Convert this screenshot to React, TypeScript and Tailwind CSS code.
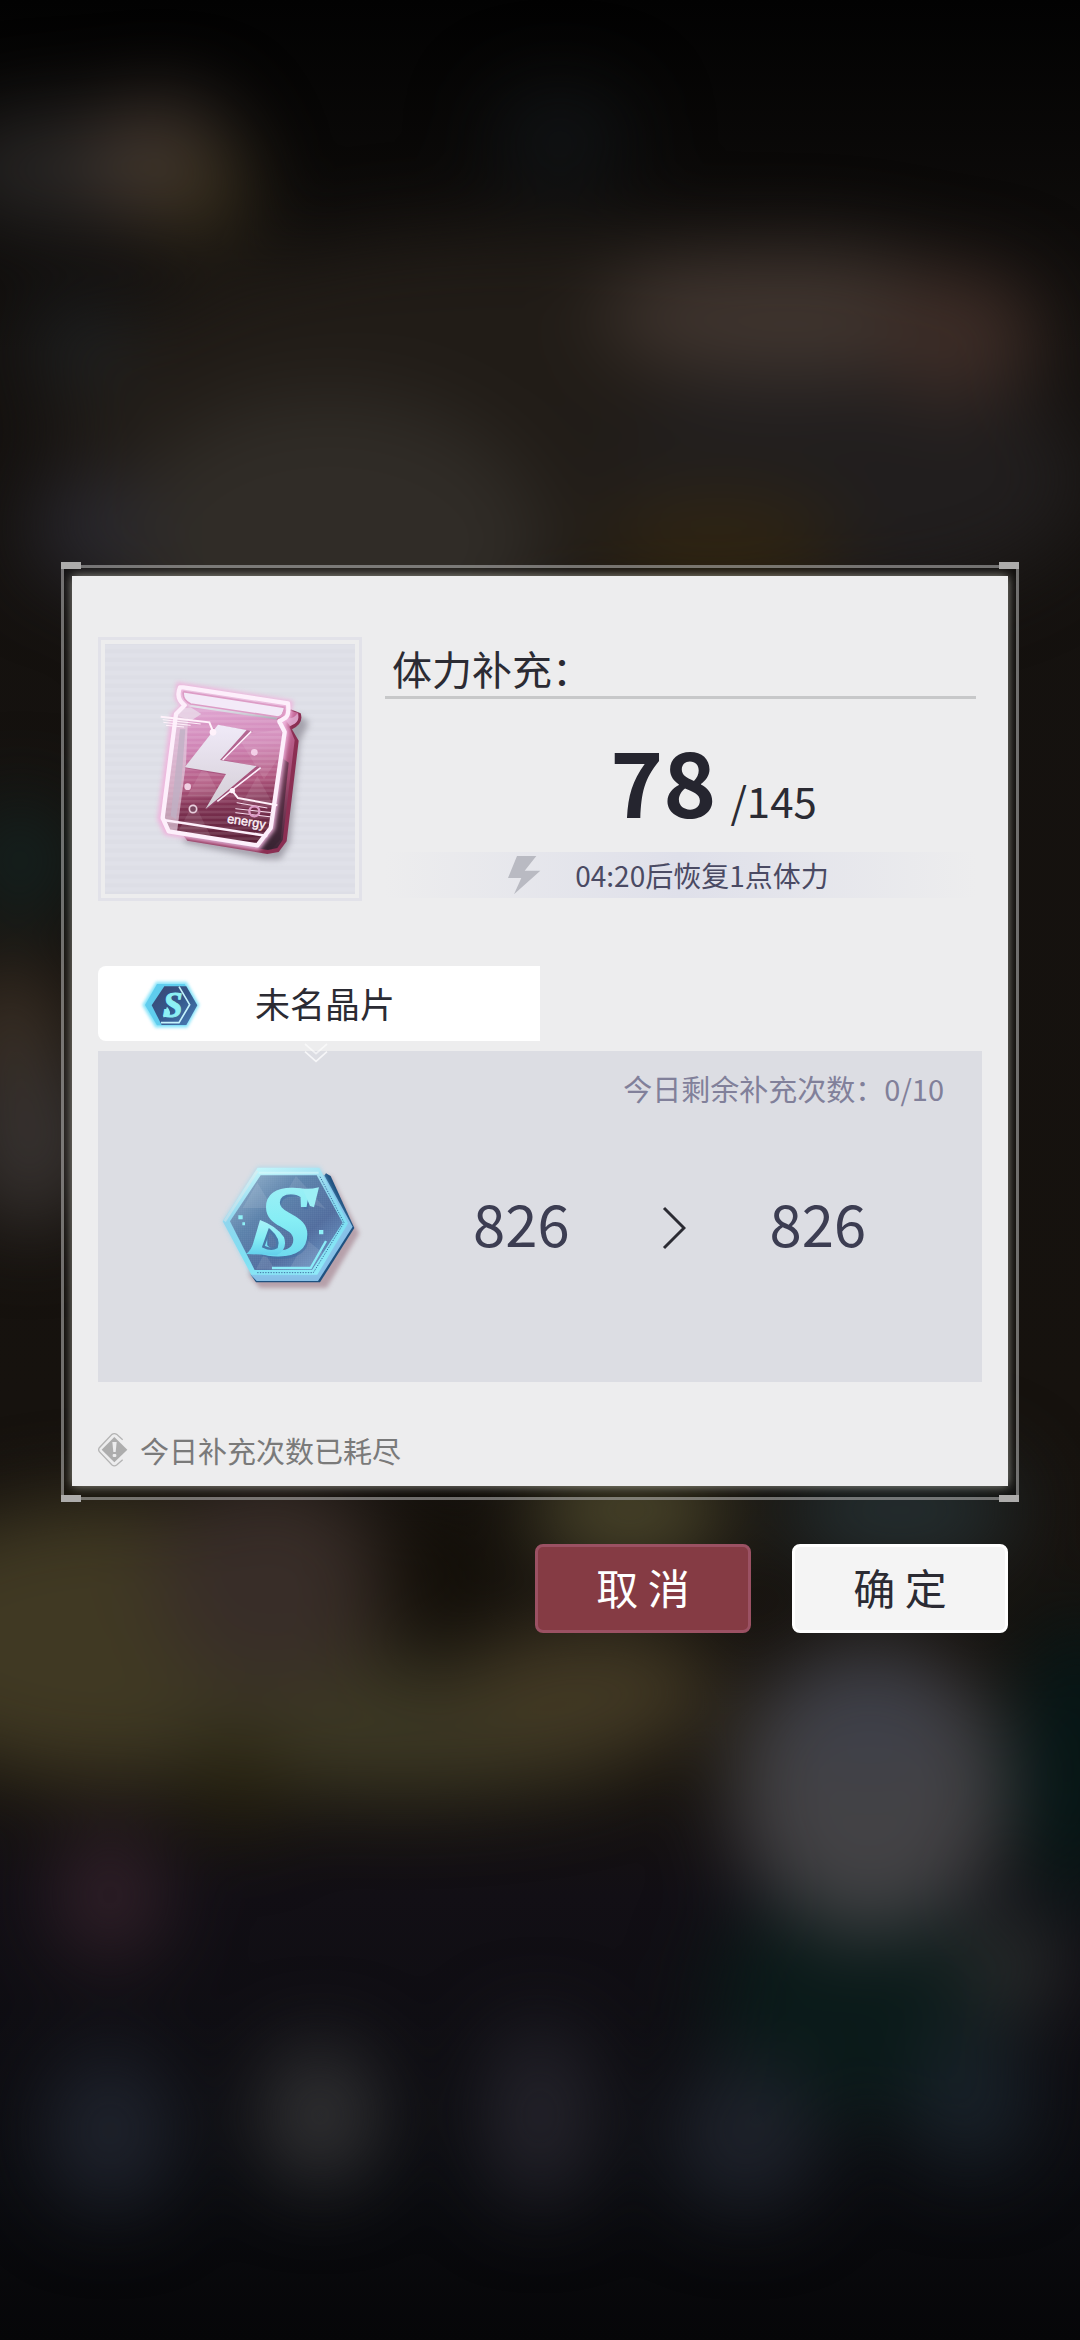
import React from 'react';
import { clsx } from 'clsx';

interface Blob {
  cx: number;
  cy: number;
  rx: number;
  ry: number;
  fill: string;
}

const blobs: Blob[] = [
  // base shading
  { cx: 520, cy: 420, rx: 460, ry: 190, fill: '#211c17' },
  { cx: 330, cy: 550, rx: 215, ry: 155, fill: '#302c27' },
  { cx: 850, cy: 480, rx: 240, ry: 120, fill: '#211e1e' },
  // top
  { cx: 60, cy: 170, rx: 120, ry: 60, fill: '#262423' },
  { cx: 160, cy: 165, rx: 75, ry: 65, fill: '#41362f' },
  { cx: 205, cy: 195, rx: 45, ry: 45, fill: '#3d331f' },
  { cx: 560, cy: 140, rx: 70, ry: 50, fill: '#111416' },
  { cx: 790, cy: 312, rx: 190, ry: 65, fill: '#40352f' },
  { cx: 960, cy: 335, rx: 80, ry: 65, fill: '#3e2d27' },
  { cx: 80, cy: 345, rx: 45, ry: 45, fill: '#1f2224' },
  { cx: 90, cy: 530, rx: 60, ry: 55, fill: '#2a2930' },
  { cx: 720, cy: 550, rx: 120, ry: 55, fill: '#302512' },
  // left and right of the dialog
  { cx: 20, cy: 860, rx: 50, ry: 60, fill: '#142422' },
  { cx: 10, cy: 1040, rx: 60, ry: 80, fill: '#3a2f24' },
  { cx: 30, cy: 1140, rx: 70, ry: 90, fill: '#373230' },
  // lower band
  { cx: 120, cy: 1640, rx: 260, ry: 140, fill: '#403923' },
  { cx: 400, cy: 1730, rx: 260, ry: 65, fill: '#3c3824' },
  { cx: 270, cy: 1580, rx: 115, ry: 105, fill: '#382d28' },
  { cx: 590, cy: 1690, rx: 130, ry: 65, fill: '#423924' },
  { cx: 630, cy: 1510, rx: 100, ry: 55, fill: '#4b462b' },
  { cx: 235, cy: 1780, rx: 40, ry: 50, fill: '#27220f' },
  { cx: 440, cy: 1570, rx: 60, ry: 60, fill: '#120e07' },
  { cx: 900, cy: 1510, rx: 120, ry: 60, fill: '#242e30' },
  { cx: 1080, cy: 1760, rx: 70, ry: 150, fill: '#061616' },
  { cx: 860, cy: 2000, rx: 150, ry: 120, fill: '#0a1a19' },
  { cx: 870, cy: 1790, rx: 138, ry: 145, fill: '#434245' },
  { cx: 870, cy: 1720, rx: 80, ry: 50, fill: '#3e404a' },
  { cx: 110, cy: 1895, rx: 52, ry: 65, fill: '#33212a' },
  { cx: 1010, cy: 1965, rx: 52, ry: 52, fill: '#2a2d2d' },
  // bottom dots
  { cx: 110, cy: 2130, rx: 65, ry: 80, fill: '#1f232d' },
  { cx: 320, cy: 2115, rx: 60, ry: 70, fill: '#323234' },
  { cx: 540, cy: 2115, rx: 58, ry: 90, fill: '#24232b' },
  { cx: 745, cy: 2135, rx: 75, ry: 75, fill: '#1e222b' },
  { cx: 970, cy: 2100, rx: 60, ry: 70, fill: '#19222a' },
];

const Backdrop: React.FC = () => (
  <svg
    className="absolute inset-0 h-full w-full"
    viewBox="0 0 1080 2340"
    preserveAspectRatio="none"
    aria-hidden="true"
  >
    <defs>
      <linearGradient id="sky" x1="0" y1="0" x2="0" y2="1">
        <stop offset="0" stopColor="#020202" />
        <stop offset="0.15" stopColor="#14110f" />
        <stop offset="0.6" stopColor="#16120e" />
        <stop offset="0.76" stopColor="#17130f" />
        <stop offset="0.81" stopColor="#120f15" />
        <stop offset="0.93" stopColor="#0b0c10" />
        <stop offset="1" stopColor="#060608" />
      </linearGradient>
      <filter id="haze" x="-50%" y="-50%" width="200%" height="200%" colorInterpolationFilters="sRGB">
        <feGaussianBlur stdDeviation="40" />
      </filter>
    </defs>
    <rect width="1080" height="2340" fill="url(#sky)" />
    <g filter="url(#haze)">
      {blobs.map((b, i) => (
        <ellipse key={i} {...b} />
      ))}
    </g>
  </svg>
);

const EnergyJar: React.FC = () => (
  <svg className="h-full w-full" viewBox="163 284 750 750" role="img" aria-label="energy">
    <defs>
      <linearGradient id="jar" x1="0.4" y1="0" x2="0.5" y2="1">
        <stop offset="0" stopColor="#e0a6d2" />
        <stop offset="0.3" stopColor="#cf83b4" />
        <stop offset="0.55" stopColor="#b0577f" />
        <stop offset="0.72" stopColor="#7c3050" />
        <stop offset="1" stopColor="#5a2038" />
      </linearGradient>
      <linearGradient id="jarSide" x1="0" y1="0" x2="0" y2="1">
        <stop offset="0" stopColor="#c86a9b" />
        <stop offset="0.5" stopColor="#a04a70" />
        <stop offset="1" stopColor="#3a2434" />
      </linearGradient>
      <linearGradient id="bolt" x1="0" y1="0" x2="0" y2="1">
        <stop offset="0" stopColor="#f0eaf8" />
        <stop offset="1" stopColor="#d3cdd5" />
      </linearGradient>
      <filter id="soft" x="-30%" y="-30%" width="160%" height="160%" colorInterpolationFilters="sRGB">
        <feGaussianBlur stdDeviation="10" />
      </filter>
      <filter id="soft2" x="-30%" y="-30%" width="160%" height="160%" colorInterpolationFilters="sRGB">
        <feGaussianBlur stdDeviation="6" />
      </filter>
      <pattern id="scan" width="20" height="16" patternUnits="userSpaceOnUse">
        <rect width="20" height="8" fill="#ffffff" opacity="0.1" />
      </pattern>
      <pattern id="scanBg" width="20" height="26" patternUnits="userSpaceOnUse">
        <rect width="20" height="13" fill="#ffffff" opacity="0.1" />
      </pattern>
    </defs>
    <rect x="163" y="284" width="750" height="750" fill="url(#scanBg)" />
    {/* drop shadow */}
    <path
      d="M430 500 L750 500 L775 520 L748 575 L718 880 L690 930 L640 930 L400 880 Z"
      fill="#a3a1ab"
      filter="url(#soft)"
    />
    {/* jar thickness */}
    <path
      d="M720 480 L750 492 Q760 522 724 540 L744 574 L708 876 L684 908 L650 914 L410 874 L392 850 Z"
      fill="#8b2f53"
    />
    <path
      d="M700 480 L742 490 Q750 514 716 532 L732 572 L696 872 L680 896 L652 902 L420 866 Z"
      fill="url(#jarSide)"
    />
    <path d="M740 492 Q752 518 718 530 L700 505 Q730 512 740 492 Z" fill="#d9a0c6" />
    <path d="M686 620 L714 640 L690 870 L662 900 L630 892 Z" fill="#33222f" opacity="0.55" />
    {/* glow */}
    <path
      d="M388 412 L714 464 L708 506 L694 520 L702 550 L660 836 L620 890 L350 846 L332 808 L372 500 L404 468 L384 446 Z"
      fill="none"
      stroke="#eeb4dc"
      strokeWidth="24"
      filter="url(#soft2)"
    />
    {/* body */}
    <path
      d="M400 470 L684 512 L702 550 L658 840 L620 888 L352 846 L336 808 L374 496 Z"
      fill="url(#jar)"
    />
    <g fill="#ffffff" opacity="0.09">
      <path d="M560 560 L640 690 L700 600 L690 540 Z" />
      <path d="M460 650 L410 740 L510 740 Z" />
      <path d="M620 680 L570 770 L670 770 Z" />
      <path d="M430 760 L380 850 L480 860 Z" />
    </g>
    <path
      d="M400 470 L684 512 L702 550 L658 840 L620 888 L352 846 L336 808 L374 496 Z"
      fill="url(#scan)"
    />
    {/* glass shine on the left */}
    <path d="M378 500 L412 505 L406 640 L378 856 L352 846 L336 808 Z" fill="#e2cfe0" opacity="0.7" />
    <path d="M388 540 L404 540 L392 700 L376 810 L360 800 Z" fill="#bfb0c4" opacity="0.8" />
    <path d="M392 476 L420 474 L452 494 L424 512 L380 500 Z" fill="#e9dbe8" opacity="0.8" />
    {/* lid */}
    <path d="M400 426 L700 474 L692 500 L678 502 L418 464 Q396 452 400 426 Z" fill="#f3eaf8" />
    <path
      d="M398 414 L712 462 Q716 494 706 504 L690 514 Q682 514 690 524 L702 548 L660 836 L620 888 L354 846 L336 806 L376 494 L402 468 Q374 446 388 414 Z"
      fill="none"
      stroke="#fdeffb"
      strokeWidth="13"
      strokeLinejoin="round"
    />
    <path d="M398 427 L702 474 Q702 500 682 503 L420 464 Q394 452 398 427" fill="none" stroke="#dd9cc6" strokeWidth="5" />
    <path d="M338 812 L650 860" stroke="#fdeffb" strokeWidth="8" />
    {/* lightning */}
    <path d="M504 528 L606 546 L520 632 L632 654 L466 782 L526 678 L402 656 Z" fill="#9c4a74" opacity="0.6" />
    <path d="M502 526 L588 542 L508 632 L618 650 L464 780 L526 674 L402 654 Z" fill="url(#bolt)" />
    <path d="M602 546 L516 632 M630 655 L500 756" stroke="#fdeffb" strokeWidth="5" fill="none" />
    {/* callouts */}
    <path d="M330 502 L476 519 L487 546" fill="none" stroke="#fff2fb" strokeWidth="6" />
    <path d="M336 511 L450 524 M338 519 L420 528 M346 528 L400 533" stroke="#fff2fb" strokeWidth="3" />
    <circle cx="487" cy="549" r="10" fill="#fff2fb" />
    <path d="M546 726 L562 746 L680 768" fill="none" stroke="#fff2fb" strokeWidth="6" />
    <circle cx="545" cy="724" r="8" fill="#fff2fb" />
    <path d="M558 760 L650 776 M554 778 L664 790 M554 790 L664 803" stroke="#f7ddee" strokeWidth="3" />
    <circle cx="611" cy="786" r="15" fill="none" stroke="#dd9cc6" strokeWidth="7" />
    {/* bubbles */}
    <circle cx="611" cy="609" r="10" fill="#f3d0e8" />
    <circle cx="411" cy="712" r="10" fill="#f0cfe2" />
    <circle cx="427" cy="779" r="11" fill="#7a4860" stroke="#e8cfdd" strokeWidth="5" />
    <text
      x="528"
      y="820"
      transform="rotate(9 528 820)"
      fill="#fff5fb"
      stroke="#fff5fb"
      strokeWidth="1"
      fontSize="38"
      className="font-['Liberation_Sans',sans-serif]"
    >
      energy
    </text>
  </svg>
);

const CrystalSmall: React.FC = () => (
  <svg className="h-[55px] w-[65px] shrink-0" viewBox="265 100 195 165" aria-hidden="true">
    <defs>
      <filter id="smallGlow" x="-30%" y="-30%" width="160%" height="160%" colorInterpolationFilters="sRGB">
        <feGaussianBlur stdDeviation="5" />
      </filter>
      <linearGradient id="smallFace" x1="0" y1="0" x2="1" y2="1">
        <stop offset="0" stopColor="#3b4672" />
        <stop offset="0.5" stopColor="#35588c" />
        <stop offset="1" stopColor="#4a7fb8" />
      </linearGradient>
    </defs>
    <path d="M322 122 H408 L444 187 L410 250 H320 L283 187 Z" fill="#6fdcf7" stroke="#8fe6fa" strokeWidth="10" filter="url(#smallGlow)" />
    <path d="M322 124 H405 L440 187 L408 248 H322 L286 187 Z" fill="#5fcdee" />
    <path d="M344 131 H410 L443 188 L410 247 H336 L306 188 Z" fill="url(#smallFace)" />
    <path d="M388 132 L420 186 L388 240 H334" fill="none" stroke="#c4f3fc" strokeWidth="5" />
    <text x="340" y="224" fontSize="106" fill="#8df0f4" stroke="#8df0f4" strokeWidth="3" className="font-['Liberation_Serif',serif] font-bold italic">
      S
    </text>
    <path d="M352 192 Q366 206 358 222 L340 224 Z" fill="#8df0f4" />
  </svg>
);

const CrystalLarge: React.FC = () => (
  <svg className="h-[134px] w-[150px] shrink-0" viewBox="80 95 450 402" role="img" aria-label="未名晶片">
    <defs>
      <filter id="hexShadow" x="-30%" y="-30%" width="160%" height="160%" colorInterpolationFilters="sRGB">
        <feGaussianBlur stdDeviation="7" />
      </filter>
      <linearGradient id="hexEdge" x1="0.3" y1="0" x2="0.7" y2="1">
        <stop offset="0" stopColor="#c3f6fb" />
        <stop offset="0.35" stopColor="#8fd6ee" />
        <stop offset="0.7" stopColor="#7ee0f3" />
        <stop offset="1" stopColor="#8feaf8" />
      </linearGradient>
      <linearGradient id="hexFace" x1="0" y1="0" x2="1" y2="1">
        <stop offset="0" stopColor="#9db9d0" />
        <stop offset="0.35" stopColor="#5a80a9" />
        <stop offset="0.65" stopColor="#4f6a9b" />
        <stop offset="1" stopColor="#6f9fd0" />
      </linearGradient>
      <linearGradient id="hexS" x1="0" y1="0" x2="0" y2="1">
        <stop offset="0" stopColor="#a9f1f7" />
        <stop offset="0.5" stopColor="#86eef5" />
        <stop offset="1" stopColor="#62cfec" />
      </linearGradient>
      <pattern id="dots" width="6" height="6" patternUnits="userSpaceOnUse">
        <rect width="3" height="3" fill="#a9c4e2" opacity="0.25" />
      </pattern>
    </defs>
    <path d="M210 140 H425 L510 312 L412 476 H212 L180 440 Z" fill="#b6a0aa" filter="url(#hexShadow)" />
    <path d="M410 132 L424 140 L495 296 L392 459 H200 L184 436 Z" fill="#1f5180" />
    <path d="M404 136 L490 292 L386 455 H202 L184 436 Z" fill="#86bfe8" />
    <path d="M204 112 H392 L480 282 L386 438 H184 L98 276 Z" fill="#8bd3ee" opacity="0.5" filter="url(#hexShadow)" />
    <path d="M205 115 H390 L476 282 L384 436 H186 L100 276 Z" fill="url(#hexEdge)" />
    <path d="M214 138 H382 L460 280 L368 422 H196 L122 276 Z" fill="url(#hexFace)" />
    <g fill="#ffffff" opacity="0.1">
      <path d="M204 160 L160 236 L250 236 Z" />
      <path d="M320 140 L290 190 L410 240 Z" />
      <path d="M350 330 L300 420 L366 420 L400 370 Z" />
      <path d="M226 370 L200 420 L256 420 Z" />
    </g>
    <path d="M214 138 H382 L460 280 L368 422 H196 L122 276 Z" fill="url(#dots)" />
    <path d="M392 142 L464 280 L372 430 H200" fill="none" stroke="#3f6ea0" strokeWidth="3" strokeDasharray="4 4" />
    <path d="M208 130 H388" stroke="#e2fcfd" strokeWidth="6" opacity="0.5" />
    <path d="M248 416 H364 L410 335" fill="none" stroke="#8becf8" strokeWidth="7" />
    <path d="M106 276 L204 124" stroke="#e8e8ea" strokeWidth="8" opacity="0.45" />
    <text x="210" y="382" fontSize="300" fill="#3c6fa5" opacity="0.5" className="font-['Liberation_Serif',serif] font-bold italic">
      S
    </text>
    <text
      x="204"
      y="374"
      fontSize="300"
      fill="url(#hexS)"
      stroke="url(#hexS)"
      strokeWidth="4"
      className="font-['Liberation_Serif',serif] font-bold italic"
    >
      S
    </text>
    {/* wedge on the upper tip and the loop at the foot */}
    <path d="M340 178 Q364 180 389 174 L374 234 L362 230 Z" fill="#9df0f6" />
    <path
      fillRule="evenodd"
      d="M212 272 Q262 290 284 324 Q296 360 262 378 L170 374 Q186 362 192 340 Z M240 302 L222 352 Q246 364 262 354 Q272 330 240 302 Z"
      fill="url(#hexS)"
    />
    <path d="M240 302 L222 352 Q246 364 262 354 Q272 330 240 302 Z" fill="none" stroke="#4a78a8" strokeWidth="7" />
    <path d="M147 258 h13 v12 h-13 z M159 279 h8 v9 h-8 z M389 302 h13 v13 h-13 z" fill="#8ff0f6" />
  </svg>
);

const WarnIcon: React.FC = () => (
  <svg className="h-[34px] w-[30px] shrink-0" viewBox="0 0 90 102" aria-hidden="true">
    <path d="M49 12 L88 50 L49 88 L11 50 Z" fill="#adadad" />
    <path d="M74 20 L56 4 Q49 0 42 4 L4 44 Q0 50 4 56 L42 96 Q49 101 56 96 L74 80" fill="none" stroke="#b4b4b4" strokeWidth="4" />
    <path d="M43 27 h13 l-3 30 h-7 z" fill="#ececed" />
    <rect x="44" y="63" width="11" height="9" rx="3" fill="#ececed" />
  </svg>
);

const corners = [
  '-top-[6px] -left-[3px]',
  '-top-[6px] -right-[3px]',
  '-bottom-[5px] -left-[3px]',
  '-bottom-[5px] -right-[3px]',
];

const App: React.FC = () => {
  return (
    <div className="relative min-h-screen overflow-hidden bg-black font-['Noto_Sans_CJK_SC',sans-serif]">
      <Backdrop />

      <main className="relative px-[61px] pt-[565px]">
        {/* Dialog */}
        <section
          role="dialog"
          aria-labelledby="dialog-title"
          className="relative border-[3px] border-white/40 bg-black/30 px-2 pt-2 pb-[11px]"
        >
          {corners.map((pos) => (
            <span key={pos} className={clsx('absolute h-[7px] w-5 bg-[#adacab]', pos)} />
          ))}

          <div className="bg-[#ededee] px-[26px] pt-[61px] pb-4 shadow-[0_0_10px_rgba(255,255,240,0.55)]">
            <div className="flex gap-[23px]">
              <div className="h-[264px] w-[264px] shrink-0 border-[3px] border-[#e2e2e9] p-1">
                <div className="h-full w-full bg-[#dddee6]">
                  <EnergyJar />
                </div>
              </div>

              <div className="mr-[6px] flex-1">
                <h1
                  id="dialog-title"
                  className="border-b-[3px] border-[#c7c8c9] pt-1 pl-[7px] text-[40px] leading-[55px] text-[#2b2b33]"
                >
                  体力补充：
                </h1>
                <p className="mt-[35px] flex h-[90px] items-baseline justify-center gap-[14px] pl-[66px] leading-[90px]">
                  <strong className="text-[90px] font-bold text-[#25252f]">78</strong>
                  <span className="text-[42px] text-[#2b2b33]">/145</span>
                </p>
                <div className="mt-7 flex h-[46px] items-center justify-center gap-[34px] bg-linear-to-r from-transparent via-[#dfe0ea] to-transparent pr-6">
                  <svg className="h-[39px] w-[33px]" viewBox="0 0 99 117" aria-hidden="true">
                    <path d="M27 0 H85 L50 44 H97 L18 115 L40 66 H0 Z" fill="#b9bac2" />
                  </svg>
                  <p className="text-[28px] leading-[46px] text-[#4a4a63]">04:20后恢复1点体力</p>
                </div>
              </div>
            </div>

            <button
              type="button"
              className="mt-[65px] flex h-[75px] w-1/2 items-center gap-[52px] rounded-l-lg bg-white pl-10"
            >
              <CrystalSmall />
              <span className="text-[35px] text-[#2b2b33]">未名晶片</span>
            </button>

            <div className="relative mt-[10px] h-[331px] bg-[#dcdde3] pt-[18px]">
              <svg className="absolute -top-2 left-[206px] h-[20px] w-[24px]" viewBox="0 0 72 60" fill="none" aria-hidden="true">
                <path d="M3 3 L36 32 L69 3" stroke="#ffffff" strokeOpacity="0.6" strokeWidth="5" />
                <path d="M3 26 L36 55 L69 26" stroke="#f6f6f8" strokeWidth="5" />
              </svg>
              <p className="pr-[38px] text-right text-[29px] leading-[38px] text-[#81809a]">今日剩余补充次数：0/10</p>
              <div className="mt-[54px] flex items-center pl-[118px] text-[58px] leading-[80px] text-[#3c3d52]">
                <CrystalLarge />
                <span className="ml-[107px] pb-3">826</span>
                <svg className="mr-[84px] ml-[92px] h-[44px] w-6" viewBox="0 0 24 44" fill="none" aria-hidden="true">
                  <path d="M2 2 L22 22 L2 42" stroke="#2b2b33" strokeWidth="3" />
                </svg>
                <span className="pb-3">826</span>
              </div>
            </div>

            <p className="mt-12 flex items-center gap-3 text-[29px] leading-[40px] text-[#7a7a7a]">
              <WarnIcon />
              今日补充次数已耗尽
            </p>
          </div>
        </section>

        {/* Actions */}
        <div className="mt-11 mr-[11px] flex justify-end gap-[41px] text-[42px]">
          <button
            type="button"
            className="h-[89px] w-[216px] rounded-lg border-[3px] border-[#9b5163] bg-[#853b44] pb-1 text-white"
          >
            取 消
          </button>
          <button
            type="button"
            className="h-[89px] w-[216px] rounded-lg border-[3px] border-white bg-[#f4f4f4] pb-1 text-[#2b2b33]"
          >
            确 定
          </button>
        </div>
      </main>
    </div>
  );
};

export default App;
